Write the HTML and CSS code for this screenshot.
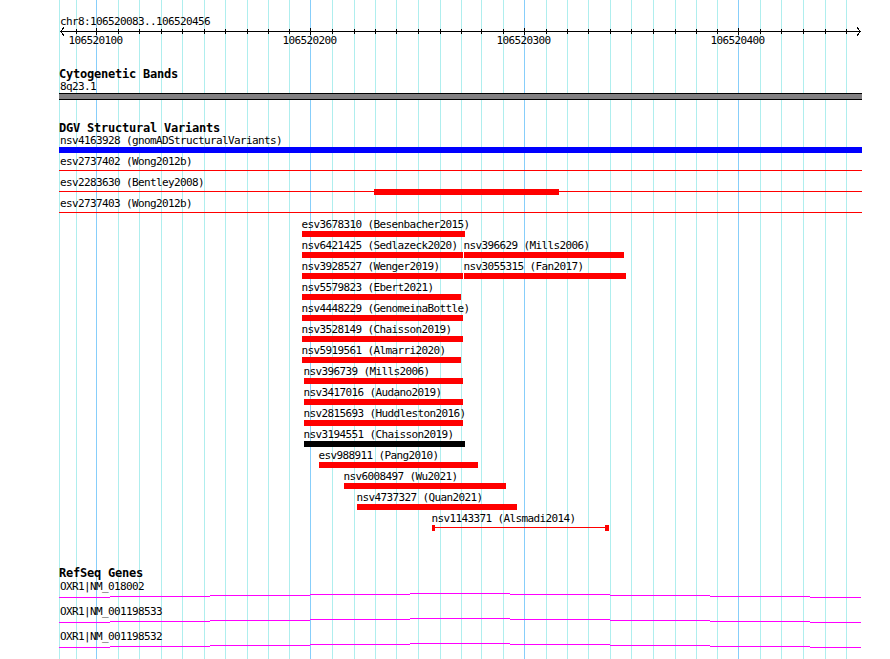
FILE: index.html
```html
<!DOCTYPE html>
<html lang="en">
<head>
  <meta charset="UTF-8">
  <title>chr8:106520083..106520456</title>
  <link rel="stylesheet" href="styles.css">
</head>
<body>
  <div class="panel">

    <!-- grid behind all tracks -->
    <svg class="grid" width="890" height="659">
      <rect class="minor" x="59" y="0" width="1" height="659"/>
      <rect class="minor" x="76" y="0" width="1" height="659"/>
      <rect class="major" x="96" y="0" width="1" height="659"/>
      <rect class="minor" x="118" y="0" width="1" height="659"/>
      <rect class="minor" x="139" y="0" width="1" height="659"/>
      <rect class="minor" x="161" y="0" width="1" height="659"/>
      <rect class="minor" x="182" y="0" width="1" height="659"/>
      <rect class="minor" x="204" y="0" width="1" height="659"/>
      <rect class="minor" x="225" y="0" width="1" height="659"/>
      <rect class="minor" x="247" y="0" width="1" height="659"/>
      <rect class="minor" x="268" y="0" width="1" height="659"/>
      <rect class="minor" x="289" y="0" width="1" height="659"/>
      <rect class="major" x="310" y="0" width="1" height="659"/>
      <rect class="minor" x="332" y="0" width="1" height="659"/>
      <rect class="minor" x="354" y="0" width="1" height="659"/>
      <rect class="minor" x="375" y="0" width="1" height="659"/>
      <rect class="minor" x="396" y="0" width="1" height="659"/>
      <rect class="minor" x="418" y="0" width="1" height="659"/>
      <rect class="minor" x="440" y="0" width="1" height="659"/>
      <rect class="minor" x="461" y="0" width="1" height="659"/>
      <rect class="minor" x="481" y="0" width="1" height="659"/>
      <rect class="minor" x="503" y="0" width="1" height="659"/>
      <rect class="major" x="524" y="0" width="1" height="659"/>
      <rect class="minor" x="546" y="0" width="1" height="659"/>
      <rect class="minor" x="567" y="0" width="1" height="659"/>
      <rect class="minor" x="588" y="0" width="1" height="659"/>
      <rect class="minor" x="610" y="0" width="1" height="659"/>
      <rect class="minor" x="631" y="0" width="1" height="659"/>
      <rect class="minor" x="653" y="0" width="1" height="659"/>
      <rect class="minor" x="675" y="0" width="1" height="659"/>
      <rect class="minor" x="696" y="0" width="1" height="659"/>
      <rect class="minor" x="717" y="0" width="1" height="659"/>
      <rect class="major" x="738" y="0" width="1" height="659"/>
      <rect class="minor" x="760" y="0" width="1" height="659"/>
      <rect class="minor" x="781" y="0" width="1" height="659"/>
      <rect class="minor" x="803" y="0" width="1" height="659"/>
      <rect class="minor" x="825" y="0" width="1" height="659"/>
      <rect class="minor" x="846" y="0" width="1" height="659"/>
    </svg>

    <!-- ruler -->
    <svg class="ruler" width="890" height="68">
      <text class="lbl" x="60" y="25">chr8:106520083..106520456</text>
      <rect x="60" y="31" width="801" height="1"/>
      <polyline class="arrow" points="64,27.5 60.5,31.5 64,35.5"/>
      <polyline class="arrow" points="857,27.5 860.5,31.5 857,35.5"/>
      <g class="ticks">
        <rect x="76" y="29" width="1" height="5"/>
        <rect x="96" y="28" width="1" height="7"/>
        <rect x="118" y="29" width="1" height="5"/>
        <rect x="139" y="29" width="1" height="5"/>
        <rect x="161" y="29" width="1" height="5"/>
        <rect x="182" y="29" width="1" height="5"/>
        <rect x="204" y="29" width="1" height="5"/>
        <rect x="225" y="29" width="1" height="5"/>
        <rect x="247" y="29" width="1" height="5"/>
        <rect x="268" y="29" width="1" height="5"/>
        <rect x="289" y="29" width="1" height="5"/>
        <rect x="310" y="28" width="1" height="7"/>
        <rect x="332" y="29" width="1" height="5"/>
        <rect x="354" y="29" width="1" height="5"/>
        <rect x="375" y="29" width="1" height="5"/>
        <rect x="396" y="29" width="1" height="5"/>
        <rect x="418" y="29" width="1" height="5"/>
        <rect x="440" y="29" width="1" height="5"/>
        <rect x="461" y="29" width="1" height="5"/>
        <rect x="481" y="29" width="1" height="5"/>
        <rect x="503" y="29" width="1" height="5"/>
        <rect x="524" y="28" width="1" height="7"/>
        <rect x="546" y="29" width="1" height="5"/>
        <rect x="567" y="29" width="1" height="5"/>
        <rect x="588" y="29" width="1" height="5"/>
        <rect x="610" y="29" width="1" height="5"/>
        <rect x="631" y="29" width="1" height="5"/>
        <rect x="653" y="29" width="1" height="5"/>
        <rect x="675" y="29" width="1" height="5"/>
        <rect x="696" y="29" width="1" height="5"/>
        <rect x="717" y="29" width="1" height="5"/>
        <rect x="738" y="28" width="1" height="7"/>
        <rect x="760" y="29" width="1" height="5"/>
        <rect x="781" y="29" width="1" height="5"/>
        <rect x="803" y="29" width="1" height="5"/>
        <rect x="825" y="29" width="1" height="5"/>
        <rect x="846" y="29" width="1" height="5"/>
      </g>
      <text class="lbl mid" x="95.5" y="44">106520100</text>
      <text class="lbl mid" x="309.5" y="44">106520200</text>
      <text class="lbl mid" x="523.5" y="44">106520300</text>
      <text class="lbl mid" x="737.5" y="44">106520400</text>
    </svg>

    <!-- cytogenetic bands -->
    <section class="track">
      <h2 class="track-title">Cytogenetic Bands</h2>
      <svg class="cyto" width="890" height="41">
        <text class="lbl" x="60" y="9">8q23.1</text>
        <rect class="band-edge" x="59" y="12" width="803" height="7"/>
        <rect class="band" x="59" y="13" width="803" height="5"/>
      </svg>
    </section>

    <!-- DGV -->
    <section class="track">
      <h2 class="track-title">DGV Structural Variants</h2>
      <svg class="dgv" width="890" height="432">
        <text class="lbl" x="60" y="9">nsv4163928 (gnomADStructuralVariants)</text>
        <rect class="sv-blue" x="59" y="12" width="803" height="6"/>

        <text class="lbl" x="60" y="30">esv2737402 (Wong2012b)</text>
        <rect class="sv-red" x="59" y="35" width="803" height="1"/>

        <text class="lbl" x="60" y="51">esv2283630 (Bentley2008)</text>
        <rect class="sv-red" x="59" y="56" width="803" height="1"/>
        <rect class="sv-red" x="374" y="54" width="185" height="6"/>

        <text class="lbl" x="60" y="72">esv2737403 (Wong2012b)</text>
        <rect class="sv-red" x="59" y="77" width="803" height="1"/>

        <text class="lbl" x="301.5" y="93">esv3678310 (Besenbacher2015)</text>
        <rect class="sv-red" x="302" y="96" width="163" height="6"/>

        <text class="lbl" x="301.5" y="114">nsv6421425 (Sedlazeck2020)</text>
        <rect class="sv-red" x="302" y="117" width="161" height="6"/>
        <text class="lbl" x="463.5" y="114">nsv396629 (Mills2006)</text>
        <rect class="sv-red" x="464" y="117" width="160" height="6"/>

        <text class="lbl" x="301.5" y="135">nsv3928527 (Wenger2019)</text>
        <rect class="sv-red" x="302" y="138" width="161" height="6"/>
        <text class="lbl" x="463.5" y="135">nsv3055315 (Fan2017)</text>
        <rect class="sv-red" x="464" y="138" width="162" height="6"/>

        <text class="lbl" x="301.5" y="156">nsv5579823 (Ebert2021)</text>
        <rect class="sv-red" x="302" y="159" width="159" height="6"/>

        <text class="lbl" x="301.5" y="177">nsv4448229 (GenomeinaBottle)</text>
        <rect class="sv-red" x="302" y="180" width="161" height="6"/>

        <text class="lbl" x="301.5" y="198">nsv3528149 (Chaisson2019)</text>
        <rect class="sv-red" x="302" y="201" width="161" height="6"/>

        <text class="lbl" x="301.5" y="219">nsv5919561 (Almarri2020)</text>
        <rect class="sv-red" x="302" y="222" width="159" height="6"/>

        <text class="lbl" x="303.5" y="240">nsv396739 (Mills2006)</text>
        <rect class="sv-red" x="304" y="243" width="159" height="6"/>

        <text class="lbl" x="303.5" y="261">nsv3417016 (Audano2019)</text>
        <rect class="sv-red" x="304" y="264" width="159" height="6"/>

        <text class="lbl" x="303.5" y="282">nsv2815693 (Huddleston2016)</text>
        <rect class="sv-red" x="304" y="285" width="159" height="6"/>

        <text class="lbl" x="303.5" y="303">nsv3194551 (Chaisson2019)</text>
        <rect class="sv-black" x="304" y="306" width="161" height="6"/>

        <text class="lbl" x="318.5" y="324">esv988911 (Pang2010)</text>
        <rect class="sv-red" x="319" y="327" width="159" height="6"/>

        <text class="lbl" x="343.5" y="345">nsv6008497 (Wu2021)</text>
        <rect class="sv-red" x="344" y="348" width="162" height="6"/>

        <text class="lbl" x="356.5" y="366">nsv4737327 (Quan2021)</text>
        <rect class="sv-red" x="357" y="369" width="160" height="6"/>

        <text class="lbl" x="431.5" y="387">nsv1143371 (Alsmadi2014)</text>
        <rect class="sv-red" x="432" y="390" width="3" height="6"/>
        <rect class="sv-red" x="435" y="392" width="170" height="1"/>
        <rect class="sv-red" x="605" y="390" width="4" height="6"/>
      </svg>
    </section>

    <!-- RefSeq -->
    <section class="track">
      <h2 class="track-title">RefSeq Genes</h2>
      <svg class="refseq" width="890" height="79">
        <text class="lbl" x="60" y="10">OXR1|NM_018002</text>
        <g class="intron">
          <rect x="59" y="17" width="51" height="1"/>
          <rect x="110" y="16" width="100" height="1"/>
          <rect x="210" y="15" width="100" height="1"/>
          <rect x="310" y="14" width="100" height="1"/>
          <rect x="410" y="13" width="100" height="1"/>
          <rect x="510" y="14" width="100" height="1"/>
          <rect x="610" y="15" width="100" height="1"/>
          <rect x="710" y="16" width="100" height="1"/>
          <rect x="810" y="17" width="51" height="1"/>
        </g>

        <text class="lbl" x="60" y="35">OXR1|NM_001198533</text>
        <g class="intron">
          <rect x="59" y="42" width="51" height="1"/>
          <rect x="110" y="41" width="100" height="1"/>
          <rect x="210" y="40" width="100" height="1"/>
          <rect x="310" y="39" width="100" height="1"/>
          <rect x="410" y="38" width="100" height="1"/>
          <rect x="510" y="39" width="100" height="1"/>
          <rect x="610" y="40" width="100" height="1"/>
          <rect x="710" y="41" width="100" height="1"/>
          <rect x="810" y="42" width="51" height="1"/>
        </g>

        <text class="lbl" x="60" y="60">OXR1|NM_001198532</text>
        <g class="intron">
          <rect x="59" y="67" width="51" height="1"/>
          <rect x="110" y="66" width="100" height="1"/>
          <rect x="210" y="65" width="100" height="1"/>
          <rect x="310" y="64" width="100" height="1"/>
          <rect x="410" y="63" width="100" height="1"/>
          <rect x="510" y="64" width="100" height="1"/>
          <rect x="610" y="65" width="100" height="1"/>
          <rect x="710" y="66" width="100" height="1"/>
          <rect x="810" y="67" width="51" height="1"/>
        </g>
      </svg>
    </section>

  </div>
</body>
</html>
```

FILE: styles.css
```css
body {
  margin: 0;
  background: #fff;
  color: #000;
}
.panel {
  position: relative;
  z-index: 0;
  width: 890px;
  height: 659px;
  overflow: hidden;
}
svg {
  display: block;
  shape-rendering: crispEdges;
}
.grid {
  position: absolute;
  top: 0;
  left: 0;
  z-index: -1;
}
.grid .minor {
  fill: #afeeee;
}
.grid .major {
  fill: #87cefa;
}
.track {
  margin: 0;
}
.track-title {
  margin: 0;
  padding-left: 59px;
  font-family: "DejaVu Sans Mono", monospace;
  font-weight: bold;
  font-size: 12px;
  letter-spacing: -0.22px;
  line-height: 13px;
  height: 13px;
}
.lbl {
  font-family: "DejaVu Sans Mono", monospace;
  font-size: 11px;
  letter-spacing: -0.62px;
  fill: #000;
}
.mid {
  text-anchor: middle;
}
.arrow {
  fill: none;
  stroke: #000;
  stroke-width: 1;
}
.band-edge {
  fill: #000;
}
.band {
  fill: #828082;
}
.sv-blue {
  fill: #0000ff;
}
.sv-red {
  fill: #ff0000;
}
.sv-black {
  fill: #000;
}
.intron rect {
  fill: #ff00ff;
}
```
